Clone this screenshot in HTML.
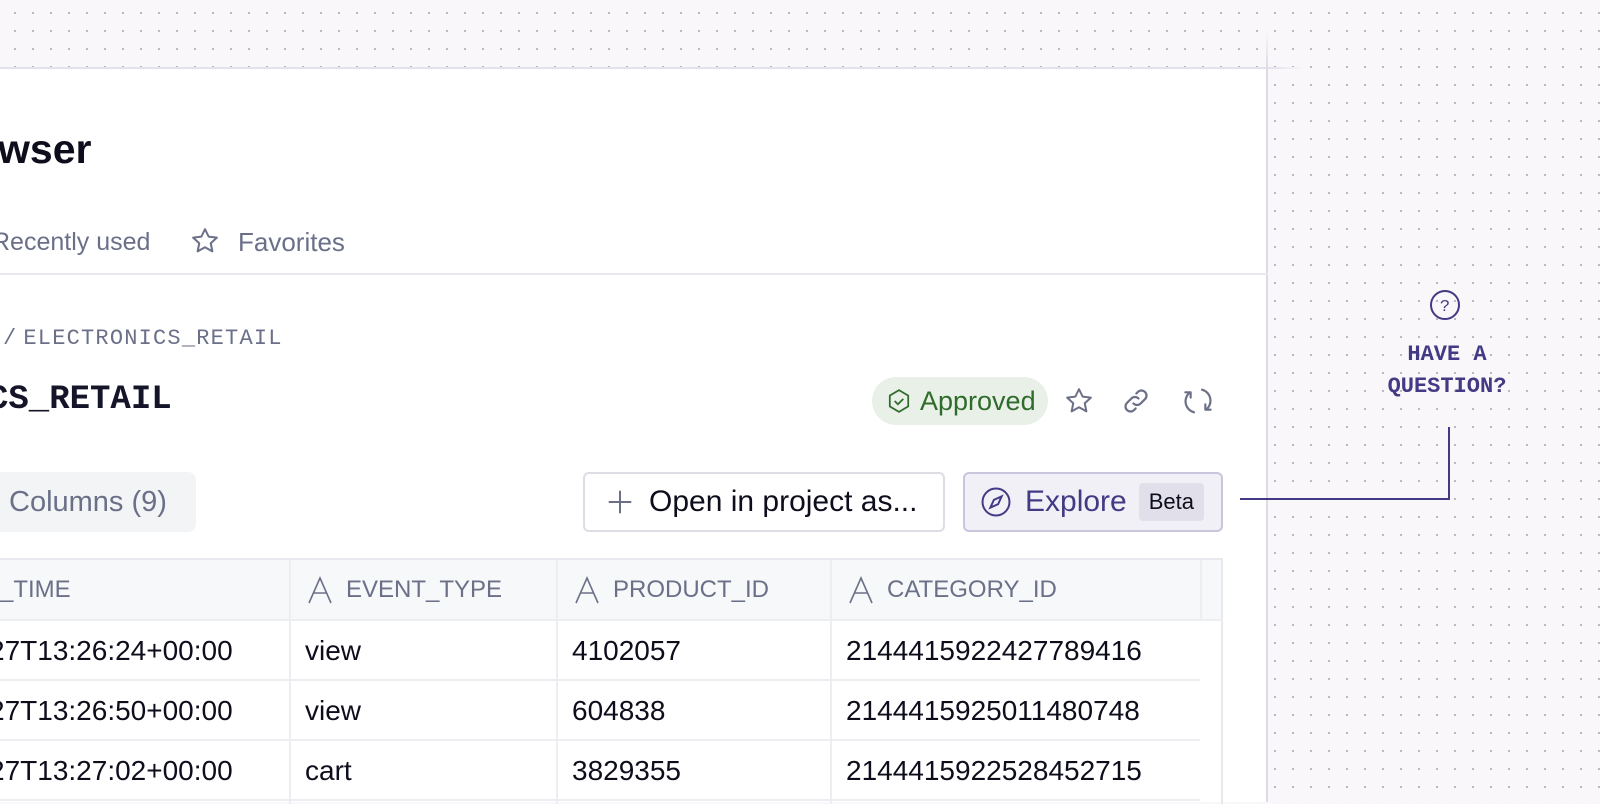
<!DOCTYPE html>
<html><head><meta charset="utf-8"><style>
*{box-sizing:border-box;margin:0;padding:0}
body{width:1600px;height:802px;overflow:hidden;position:relative;font-family:"Liberation Sans",sans-serif;background-color:#f9f7f9;
background-image:radial-gradient(circle,#b9b7bc 1px,transparent 1.3px);background-size:18px 18px;background-position:6px 4px}
.panel{position:absolute;left:0;top:67px;width:1268px;height:735px;background:#fff;border-top:2px solid #e2e0ea;border-right:2px solid #dcdae4}
.a{position:absolute;white-space:nowrap}
.mono{font-family:"Liberation Mono",monospace}
.cell{position:absolute;height:60px;display:flex;align-items:center;font-size:28px;color:#0d0d1c;padding-left:14px}
.hd{color:#6b7088;font-size:24px;background:#f7f8fa}
.hd svg{margin-right:13px;margin-left:2px}
</style></head><body>
<div class="a" style="left:1266px;top:30px;width:2px;height:40px;background:linear-gradient(#f9f7f9,#dcdae4)"></div>
<div class="a" style="left:1266px;top:67px;width:40px;height:2px;background:linear-gradient(90deg,#e2e0ea,#f9f7f9)"></div>
<div class="panel">
 <div class="a" style="left:-2px;top:57px;font-size:41px;font-weight:bold;color:#0d0d1c">wser</div>
 <div class="a" style="left:-8px;top:159px;font-size:25px;color:#6b7088">Recently used</div>
 <svg class="a" style="left:190px;top:157px" width="30" height="30" viewBox="0 0 24 24" fill="none" stroke="#6b7088" stroke-width="1.6" stroke-linejoin="round"><path d="M12 2.5l2.9 6 6.6.8-4.9 4.5 1.3 6.5L12 17l-5.9 3.3 1.3-6.5L2.5 9.3l6.6-.8z"/></svg>
 <div class="a" style="left:238px;top:158px;font-size:26px;color:#6b7088">Favorites</div>
 <div class="a" style="left:0;top:204px;width:1268px;height:2px;background:#e8e8ee"></div>
 <div class="a mono" style="left:3px;top:257px;font-size:22px;color:#6b7088;letter-spacing:1.2px">/<span style="margin-left:6px">ELECTRONICS_RETAIL</span></div>
 <div class="a mono" style="left:-12px;top:312px;font-size:34px;font-weight:bold;color:#15152a">CS_RETAIL</div>
 <div class="a" style="left:872px;top:308px;width:176px;height:48px;border-radius:24px;background:#e8f0e8;color:#2f6b2a;font-size:27px;display:flex;align-items:center;padding-left:14px">
  <svg width="26" height="26" viewBox="0 0 24 24" fill="none" stroke="#2f6b2a" stroke-width="1.6"><path d="M12 2l8.5 5v10L12 22l-8.5-5V7z"/><path d="M8 12l3 3 5-5"/></svg><span style="margin-left:8px">Approved</span></div>
 <svg class="a" style="left:1064px;top:317px" width="30" height="30" viewBox="0 0 24 24" fill="none" stroke="#6b7088" stroke-width="1.6" stroke-linejoin="round"><path d="M12 2.5l2.9 6 6.6.8-4.9 4.5 1.3 6.5L12 17l-5.9 3.3 1.3-6.5L2.5 9.3l6.6-.8z"/></svg>
 <svg class="a" style="left:1121px;top:317px" width="30" height="30" viewBox="0 0 24 24" fill="none" stroke="#6b7088" stroke-width="1.8" stroke-linecap="round"><path d="M10 14a4 4 0 005.7 0l3.5-3.5a4 4 0 00-5.7-5.7l-1.2 1.2"/><path d="M14 10a4 4 0 00-5.7 0l-3.5 3.5a4 4 0 005.7 5.7l1.2-1.2"/></svg>
 <svg class="a" style="left:1182px;top:316px" width="32" height="32" viewBox="0 0 24 24" fill="none" stroke="#6b7088" stroke-width="1.6" stroke-linecap="round" stroke-linejoin="round"><path d="M9 20.5A8.5 8.5 0 016 5.5"/><path d="M2.5 5.5H6.5V9.5"/><path d="M15 3.5A8.5 8.5 0 0118 18.5"/><path d="M21.5 18.5H17.5V14.5"/></svg>
 <div class="a" style="left:-10px;top:403px;width:206px;height:60px;border-radius:8px;background:#f3f4f6;color:#6b7088;font-size:29px;display:flex;align-items:center;padding-left:19px">Columns (9)</div>
 <div class="a" style="left:583px;top:403px;width:362px;height:60px;border-radius:6px;border:2px solid #dcdde5;font-size:30px;color:#0d0d1c;display:flex;align-items:center;padding-left:20px">
  <svg width="30" height="30" viewBox="0 0 24 24" stroke="#6b7088" stroke-width="1.6"><path d="M12 3v18M3 12h18"/></svg><span style="margin-left:14px">Open in project as...</span></div>
 <div class="a" style="left:963px;top:403px;width:260px;height:60px;border-radius:6px;border:2px solid #c9c5dd;background:#f1f0f6;font-size:30px;color:#433a85;display:flex;align-items:center;padding-left:14px">
  <svg width="34" height="34" viewBox="0 0 24 24" fill="none" stroke="#433a85" stroke-width="1.4"><circle cx="12" cy="12" r="9.5"/><path d="M16 8l-2.5 5.5L8 16l2.5-5.5z"/></svg><span style="margin-left:12px">Explore</span>
  <span style="margin-left:12px;background:#e1dfe9;color:#0d0d1c;font-size:22px;padding:6px 10px;border-radius:4px">Beta</span></div>
 <div class="a" style="left:0;top:489px;width:1223px;height:2px;background:#e8e9ee"></div>
 <div class="a" style="left:1221px;top:489px;width:2px;height:246px;background:#e8e9ee"></div>
 <div class="cell hd" style="left:0;top:491px;width:289px;padding-left:0">_TIME</div>
 <div class="cell hd" style="left:291px;top:491px;width:265px"><svg width="26" height="28" viewBox="0 0 26 28" fill="none" stroke="#6b7088" stroke-width="1.6"><path d="M2 27L13 2l11 25M6.5 17h13"/></svg>EVENT_TYPE</div>
 <div class="cell hd" style="left:558px;top:491px;width:272px"><svg width="26" height="28" viewBox="0 0 26 28" fill="none" stroke="#6b7088" stroke-width="1.6"><path d="M2 27L13 2l11 25M6.5 17h13"/></svg>PRODUCT_ID</div>
 <div class="cell hd" style="left:832px;top:491px;width:368px"><svg width="26" height="28" viewBox="0 0 26 28" fill="none" stroke="#6b7088" stroke-width="1.6"><path d="M2 27L13 2l11 25M6.5 17h13"/></svg>CATEGORY_ID</div>
 <div class="cell hd" style="left:1202px;top:491px;width:19px"></div>
 <div class="a" style="left:289px;top:491px;width:2px;height:244px;background:#eceef2"></div>
 <div class="a" style="left:556px;top:491px;width:2px;height:244px;background:#eceef2"></div>
 <div class="a" style="left:830px;top:491px;width:2px;height:244px;background:#eceef2"></div>
 <div class="a" style="left:1200px;top:491px;width:2px;height:60px;background:#eceef2"></div>
 <div class="a" style="left:0;top:550px;width:1223px;height:2px;background:#eceef2"></div>
 <div class="a" style="left:0;top:610px;width:1200px;height:2px;background:#eceef2"></div>
 <div class="a" style="left:0;top:670px;width:1200px;height:2px;background:#eceef2"></div>
 <div class="a" style="left:0;top:730px;width:1200px;height:2px;background:#eceef2"></div>
 <div class="cell" style="left:-25px;top:552px">27T13:26:24+00:00</div>
 <div class="cell" style="left:291px;top:552px">view</div>
 <div class="cell" style="left:558px;top:552px">4102057</div>
 <div class="cell" style="left:832px;top:552px">2144415922427789416</div>
 <div class="cell" style="left:-25px;top:612px">27T13:26:50+00:00</div>
 <div class="cell" style="left:291px;top:612px">view</div>
 <div class="cell" style="left:558px;top:612px">604838</div>
 <div class="cell" style="left:832px;top:612px">2144415925011480748</div>
 <div class="cell" style="left:-25px;top:672px">27T13:27:02+00:00</div>
 <div class="cell" style="left:291px;top:672px">cart</div>
 <div class="cell" style="left:558px;top:672px">3829355</div>
 <div class="cell" style="left:832px;top:672px">2144415922528452715</div>
</div>
<svg class="a" style="left:1429px;top:289px" width="32" height="32" viewBox="0 0 32 32" fill="none" stroke="#433a85" stroke-width="2"><circle cx="16" cy="16" r="14"/><text x="16" y="22" text-anchor="middle" font-family="Liberation Mono" font-size="17" fill="#433a85" stroke="none">?</text></svg>
<div class="a mono" style="left:1347px;top:339px;width:200px;text-align:center;font-size:22px;font-weight:bold;color:#433a85;line-height:32px">HAVE A<br>QUESTION?</div>
<div class="a" style="left:1448px;top:427px;width:2px;height:73px;background:#433a85"></div>
<div class="a" style="left:1240px;top:498px;width:210px;height:2px;background:#433a85"></div>
</body></html>
